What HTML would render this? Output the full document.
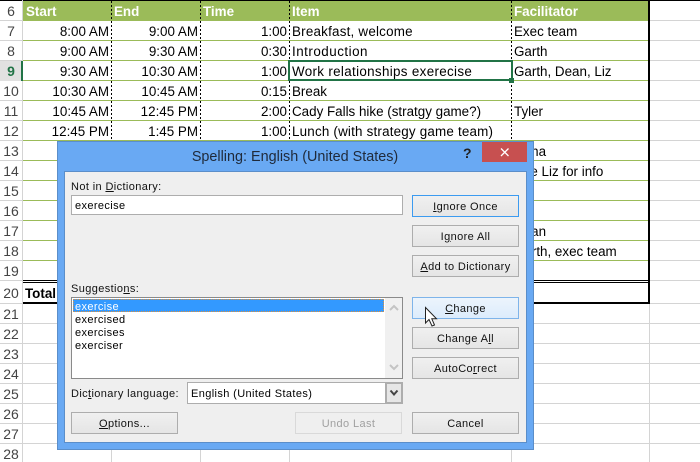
<!DOCTYPE html>
<html><head><meta charset="utf-8">
<style>
html,body{margin:0;padding:0;background:#fff}
#p{position:relative;width:700px;height:462px;overflow:hidden;background:#fff;font-family:"Liberation Sans",sans-serif;color:#000}
#p div{position:absolute;box-sizing:border-box;white-space:nowrap}
.h{left:0;right:0;height:1px;background:#d4d4d4}
.g{left:23px;width:626px;height:1px;background:#9bbb59}
.v{width:1px;background:#d4d4d4}
.d{width:1px;top:1px;height:140px;background-image:repeating-linear-gradient(#000 0,#000 2px,transparent 2px,transparent 4px)}
.n{left:0;width:22px;text-align:center;font-size:14px;height:20px;line-height:20px;color:#444}
.c{font-size:13.4px;height:20px;line-height:22px}
.r{text-align:right}
.t{font-size:13.4px;height:20px;line-height:22px;color:#fff;font-weight:bold}
.l{font-size:11px;letter-spacing:.38px;color:#111;height:16px;line-height:18px}
.b{left:412px;width:107px;height:22px;border:1px solid #adadad;background:linear-gradient(#f0f0f0,#e5e5e5);font-size:11px;letter-spacing:.38px;text-align:center;line-height:22px;color:#111}
u{text-decoration:underline}
</style></head><body>
<div id="p">
<div class="h" style="top:0;background:#000"></div>
<div class="h" style="top:20px"></div><div class="h" style="top:40px"></div><div class="h" style="top:60px"></div><div class="h" style="top:80px"></div><div class="h" style="top:100px"></div><div class="h" style="top:120px"></div><div class="h" style="top:140px"></div><div class="h" style="top:160px"></div><div class="h" style="top:180px"></div><div class="h" style="top:200px"></div><div class="h" style="top:220px"></div><div class="h" style="top:240px"></div><div class="h" style="top:260px"></div><div class="h" style="top:280px"></div><div class="h" style="top:303px"></div><div class="h" style="top:323px"></div><div class="h" style="top:343px"></div><div class="h" style="top:363px"></div><div class="h" style="top:383px"></div><div class="h" style="top:403px"></div><div class="h" style="top:423px"></div><div class="h" style="top:443px"></div>
<div class="v" style="left:22px;top:0;height:462px"></div>
<div class="v" style="left:111px;top:303px;height:159px"></div>
<div class="v" style="left:200px;top:303px;height:159px"></div>
<div class="v" style="left:289px;top:303px;height:159px"></div>
<div class="v" style="left:511px;top:303px;height:159px"></div>
<div class="v" style="left:649px;top:303px;height:159px"></div>

<div style="left:23px;top:1px;width:626px;height:20px;background:#9bbb59"></div>
<div class="g" style="top:40px"></div><div class="g" style="top:60px"></div><div class="g" style="top:80px"></div><div class="g" style="top:100px"></div><div class="g" style="top:120px"></div><div class="g" style="top:140px"></div><div class="g" style="top:160px"></div><div class="g" style="top:180px"></div><div class="g" style="top:200px"></div><div class="g" style="top:220px"></div><div class="g" style="top:240px"></div><div class="g" style="top:260px"></div>
<div style="left:23px;top:21px;width:626px;height:19px;background:#fff"></div>
<div style="left:23px;top:41px;width:626px;height:19px;background:#fff"></div>

<div class="d" style="left:111px"></div><div class="d" style="left:200px"></div><div class="d" style="left:289px"></div><div class="d" style="left:511px"></div>

<div style="left:648px;top:0;width:2px;height:304px;background:#000"></div>
<div style="left:23px;top:280px;width:627px;height:1px;background:#000"></div>
<div style="left:23px;top:282px;width:627px;height:1px;background:#000"></div>
<div style="left:23px;top:302px;width:627px;height:2px;background:#000"></div>

<div style="left:0;top:61px;width:22px;height:20px;background:#e1e1e1"></div>
<div class="n" style="top:1px">6</div><div class="n" style="top:21px">7</div><div class="n" style="top:41px">8</div>
<div class="n" style="top:61px;color:#217346;font-weight:bold">9</div>
<div style="left:21px;top:61px;width:2px;height:20px;background:#217346"></div>
<div class="n" style="top:81px">10</div><div class="n" style="top:101px">11</div><div class="n" style="top:121px">12</div><div class="n" style="top:141px">13</div><div class="n" style="top:161px">14</div><div class="n" style="top:181px">15</div><div class="n" style="top:201px">16</div><div class="n" style="top:221px">17</div><div class="n" style="top:241px">18</div><div class="n" style="top:261px">19</div><div class="n" style="top:283px">20</div><div class="n" style="top:304px">21</div><div class="n" style="top:324px">22</div><div class="n" style="top:344px">23</div><div class="n" style="top:364px">24</div><div class="n" style="top:384px">25</div><div class="n" style="top:404px">26</div><div class="n" style="top:424px">27</div><div class="n" style="top:444px">28</div>

<div class="t" style="left:26px;top:1px">Start</div><div class="t" style="left:114px;top:1px">End</div><div class="t" style="left:203px;top:1px">Time</div><div class="t" style="left:292px;top:1px">Item</div><div class="t" style="left:514px;top:1px">Facilitator</div>

<div class="c r" style="right:591px;top:21px">8:00 AM</div><div class="c r" style="right:502px;top:21px">9:00 AM</div><div class="c r" style="right:413px;top:21px">1:00</div><div class="c" style="left:292px;top:21px;letter-spacing:.22px">Breakfast, welcome</div><div class="c" style="left:514px;top:21px">Exec team</div>
<div class="c r" style="right:591px;top:41px">9:00 AM</div><div class="c r" style="right:502px;top:41px">9:30 AM</div><div class="c r" style="right:413px;top:41px">0:30</div><div class="c" style="left:292px;top:41px;letter-spacing:.5px">Introduction</div><div class="c" style="left:514px;top:41px">Garth</div>
<div class="c r" style="right:591px;top:61px">9:30 AM</div><div class="c r" style="right:502px;top:61px">10:30 AM</div><div class="c r" style="right:413px;top:61px">1:00</div><div class="c" style="left:292px;top:61px;letter-spacing:.33px">Work relationships exerecise</div><div class="c" style="left:514px;top:61px">Garth, Dean, Liz</div>
<div class="c r" style="right:591px;top:81px">10:30 AM</div><div class="c r" style="right:502px;top:81px">10:45 AM</div><div class="c r" style="right:413px;top:81px">0:15</div><div class="c" style="left:292px;top:81px">Break</div>
<div class="c r" style="right:591px;top:101px">10:45 AM</div><div class="c r" style="right:502px;top:101px">12:45 PM</div><div class="c r" style="right:413px;top:101px">2:00</div><div class="c" style="left:292px;top:101px">Cady Falls hike (stratgy game?)</div><div class="c" style="left:514px;top:101px">Tyler</div>
<div class="c r" style="right:591px;top:121px">12:45 PM</div><div class="c r" style="right:502px;top:121px">1:45 PM</div><div class="c r" style="right:413px;top:121px">1:00</div><div class="c" style="left:292px;top:121px;letter-spacing:.2px">Lunch (with strategy game team)</div>
<div class="c" style="left:514px;top:141px">Dana</div><div class="c" style="left:514px;top:161px">See Liz for info</div><div class="c" style="left:514px;top:221px">Dean</div><div class="c" style="left:514px;top:241px">Garth, exec team</div>
<div class="c" style="left:25px;top:283px;font-weight:bold">Total</div>

<div style="left:288px;top:60px;width:225px;height:21px;border:2px solid #217346"></div>
<div style="left:509px;top:78px;width:5px;height:5px;background:#217346;border:0"></div>

<!-- dialog -->
<div style="left:57px;top:141px;width:477px;height:309px;background:#69a9f3;border:1px solid #5b8ec9"></div>
<div style="left:64px;top:171px;width:463px;height:272px;background:#efefef;border:1px solid #5b8ec9"></div>
<div style="left:57px;top:148px;width:476px;text-align:center;font-size:14.4px;height:18px;line-height:18px;color:#1f2a3a">Spelling: English (United States)</div>
<div style="left:463px;top:144px;font-size:14px;font-weight:bold;color:#222;height:18px;line-height:18px">?</div>
<div style="left:482px;top:142px;width:45px;height:20px;background:#c75050"></div>
<svg style="position:absolute;left:500px;top:148px" width="10" height="9" viewBox="0 0 10 9"><path d="M1 .5L8.5 8M8.5 .5L1 8" stroke="#fff" stroke-width="1.3" fill="none"/></svg>

<div class="l" style="left:71px;top:178px">Not in <u>D</u>ictionary:</div>
<div style="left:71px;top:195px;width:332px;height:20px;background:#fff;border:1px solid #adadad"></div>
<div class="l" style="left:75px;top:197px;color:#000">exerecise</div>

<div class="l" style="left:71px;top:280px">Suggestio<u>n</u>s:</div>
<div style="left:71px;top:297px;width:332px;height:82px;background:#fff;border:1px solid #8a8a8a"></div>
<div style="left:73px;top:299px;width:311px;height:13px;background:#3399ff;border:1px dotted #e0913a"></div>
<div class="l" style="left:75px;top:300px;color:#fff;line-height:14px;height:14px">exercise</div>
<div class="l" style="left:75px;top:313px;color:#000;line-height:14px;height:14px">exercised</div>
<div class="l" style="left:75px;top:326px;color:#000;line-height:14px;height:14px">exercises</div>
<div class="l" style="left:75px;top:339px;color:#000;line-height:14px;height:14px">exerciser</div>
<div style="left:385px;top:298px;width:17px;height:80px;background:#f0f0f0"></div>
<svg style="position:absolute;left:388px;top:303px" width="12" height="70" viewBox="0 0 12 70"><path d="M2 7L6 3L10 7" stroke="#c4c4c4" stroke-width="2" fill="none"/><path d="M2 62L6 66L10 62" stroke="#c4c4c4" stroke-width="2" fill="none"/></svg>

<div class="l" style="left:71px;top:385px">Dic<u>t</u>ionary language:</div>
<div style="left:187px;top:382px;width:216px;height:22px;background:#fff;border:1px solid #adadad"></div>
<div class="l" style="left:191px;top:385px;color:#000">English (United States)</div>
<div style="left:385px;top:382px;width:18px;height:22px;background:#e6e6e6;border:2px solid #adadad"></div>
<svg style="position:absolute;left:389px;top:389px" width="10" height="8" viewBox="0 0 10 8"><path d="M1.5 1.5L5 5.5L8.5 1.5" stroke="#444" stroke-width="2" fill="none"/></svg>

<div class="b" style="top:195px;border-color:#3c9bf0;background:linear-gradient(#f0f0f0,#e6e6e6)"><u>I</u>gnore Once</div>
<div class="b" style="top:225px">I<u>g</u>nore All</div>
<div class="b" style="top:255px"><u>A</u>dd to Dictionary</div>
<div class="b" style="top:297px;border-color:#7eb4ea;background:linear-gradient(#ecf4fc,#dcecfc)"><u>C</u>hange</div>
<div class="b" style="top:327px">Change A<u>l</u>l</div>
<div class="b" style="top:357px">AutoCo<u>r</u>rect</div>
<div class="b" style="top:412px">Cancel</div>
<div class="b" style="left:71px;top:412px"><u>O</u>ptions...</div>
<div class="b" style="left:295px;top:412px;border-color:#d9d9d9;background:#efefef;color:#a0a0a0">Undo Last</div>

<svg style="position:absolute;left:424px;top:306px" width="15" height="22" viewBox="0 0 15 22"><path d="M1.5 1.5V17L5 13.5L8 20L10.5 19L7.8 12.8H12.5Z" fill="#fff" stroke="#222" stroke-width="1"/></svg>
</div>
</body></html>
